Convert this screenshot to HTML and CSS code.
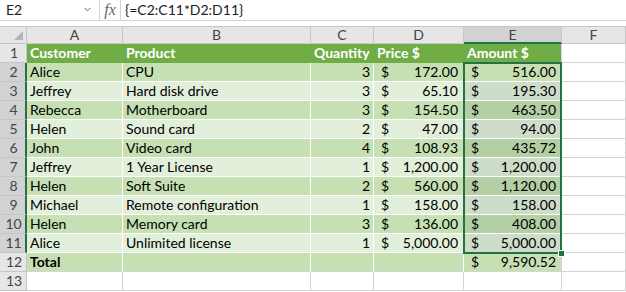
FILE: index.html
```html
<!DOCTYPE html>
<html lang="en">
<head>
    <meta charset="UTF-8">
    <title>Orders - Sheet1</title>
    <link rel="stylesheet" href="styles.css">
</head>
<body>

    <!-- Barre de formule -->
    <div class="formula-bar">
        <div class="name-box">
            <span>E2</span>
            <svg width="7" height="5" viewBox="0 0 7 5"><polyline points="0.5,0.8 3.5,3.8 6.5,0.8" fill="none" stroke="#666" stroke-width="1"/></svg>
        </div>
        <div class="fx">fx</div>
        <div class="formula">{=C2:C11*D2:D11}</div>
    </div>
    <div class="bar-gap"></div>

    <div class="sheet">
        <!-- En-têtes de colonnes -->
        <div class="corner"></div>
        <div class="ch">A</div>
        <div class="ch">B</div>
        <div class="ch">C</div>
        <div class="ch">D</div>
        <div class="ch on">E</div>
        <div class="ch">F</div>

        <!-- Ligne 1 : en-tête du tableau -->
        <div class="rh">1</div>
        <div class="cell th">Customer</div>
        <div class="cell th">Product</div>
        <div class="cell th">Quantity</div>
        <div class="cell th">Price $</div>
        <div class="cell th last">Amount $</div>
        <div class="cell"></div>

        <!-- Ligne 2 + plage sélectionnée E2:E11 -->
        <div class="rh on">2</div>
        <div class="cell even">Alice</div>
        <div class="cell even">CPU</div>
        <div class="cell even num">3</div>
        <div class="cell even acc"><span>$</span><span>172.00</span></div>
        <div class="sel-range">
            <div class="cell even acc last"><span>$</span><span>516.00</span></div>
            <div class="cell odd sel acc last"><span>$</span><span>195.30</span></div>
            <div class="cell even sel acc last"><span>$</span><span>463.50</span></div>
            <div class="cell odd sel acc last"><span>$</span><span>94.00</span></div>
            <div class="cell even sel acc last"><span>$</span><span>435.72</span></div>
            <div class="cell odd sel acc last"><span>$</span><span>1,200.00</span></div>
            <div class="cell even sel acc last"><span>$</span><span>1,120.00</span></div>
            <div class="cell odd sel acc last"><span>$</span><span>158.00</span></div>
            <div class="cell even sel acc last"><span>$</span><span>408.00</span></div>
            <div class="cell odd sel acc last"><span>$</span><span>5,000.00</span></div>
            <div class="sel-box"><div class="fill-handle"></div></div>
        </div>
        <div class="cell"></div>

        <div class="rh on">3</div>
        <div class="cell odd">Jeffrey</div>
        <div class="cell odd">Hard disk drive</div>
        <div class="cell odd num">3</div>
        <div class="cell odd acc"><span>$</span><span>65.10</span></div>
        <div class="cell"></div>

        <div class="rh on">4</div>
        <div class="cell even">Rebecca</div>
        <div class="cell even">Motherboard</div>
        <div class="cell even num">3</div>
        <div class="cell even acc"><span>$</span><span>154.50</span></div>
        <div class="cell"></div>

        <div class="rh on">5</div>
        <div class="cell odd">Helen</div>
        <div class="cell odd">Sound card</div>
        <div class="cell odd num">2</div>
        <div class="cell odd acc"><span>$</span><span>47.00</span></div>
        <div class="cell"></div>

        <div class="rh on">6</div>
        <div class="cell even">John</div>
        <div class="cell even">Video card</div>
        <div class="cell even num">4</div>
        <div class="cell even acc"><span>$</span><span>108.93</span></div>
        <div class="cell"></div>

        <div class="rh on">7</div>
        <div class="cell odd">Jeffrey</div>
        <div class="cell odd">1 Year License</div>
        <div class="cell odd num">1</div>
        <div class="cell odd acc"><span>$</span><span>1,200.00</span></div>
        <div class="cell"></div>

        <div class="rh on">8</div>
        <div class="cell even">Helen</div>
        <div class="cell even">Soft Suite</div>
        <div class="cell even num">2</div>
        <div class="cell even acc"><span>$</span><span>560.00</span></div>
        <div class="cell"></div>

        <div class="rh on">9</div>
        <div class="cell odd">Michael</div>
        <div class="cell odd">Remote configuration</div>
        <div class="cell odd num">1</div>
        <div class="cell odd acc"><span>$</span><span>158.00</span></div>
        <div class="cell"></div>

        <div class="rh on">10</div>
        <div class="cell even">Helen</div>
        <div class="cell even">Memory card</div>
        <div class="cell even num">3</div>
        <div class="cell even acc"><span>$</span><span>136.00</span></div>
        <div class="cell"></div>

        <div class="rh on">11</div>
        <div class="cell odd">Alice</div>
        <div class="cell odd">Unlimited license</div>
        <div class="cell odd num">1</div>
        <div class="cell odd acc"><span>$</span><span>5,000.00</span></div>
        <div class="cell"></div>

        <!-- Ligne 12 : total -->
        <div class="rh">12</div>
        <div class="cell even total">Total</div>
        <div class="cell even total"></div>
        <div class="cell even total"></div>
        <div class="cell even total"></div>
        <div class="cell even total acc last"><span>$</span><span>9,590.52</span></div>
        <div class="cell"></div>

        <div class="rh">13</div>
        <div class="cell"></div>
        <div class="cell"></div>
        <div class="cell"></div>
        <div class="cell"></div>
        <div class="cell"></div>
        <div class="cell"></div>
    </div>

</body>
</html>
```

FILE: styles.css
```css
body {
    margin: 0;
    width: 626px;
    height: 292px;
    overflow: hidden;
    background-color: #ffffff;
    color: #000000;
    font-family: Lato, "Liberation Sans", sans-serif;
    font-size: 14px;
}
.formula-bar {
    display: flex;
    height: 20px;
    border-bottom: 1px solid #d4d4d4;
    line-height: 20px;
}
.name-box {
    width: 100px;
    box-sizing: border-box;
    display: flex;
    align-items: center;
    justify-content: space-between;
    padding: 0 8px 0 6px;
    border-right: 1px solid #d4d4d4;
    color: #222;
}
.name-box svg {
    margin-top: -2px;
}
.fx {
    width: 21px;
    box-sizing: border-box;
    border-right: 1px solid #d4d4d4;
    text-align: center;
    font-family: "Liberation Serif", serif;
    font-style: italic;
    font-size: 16px;
    color: #666;
}
.formula {
    padding-left: 4px;
    color: #222;
}
.bar-gap {
    height: 5px;
}
.sheet {
    display: grid;
    grid-template-columns: 27px 96px 188px 63px 90px 98px 64px;
    grid-template-rows: 17px repeat(13, 19px);
    border-top: 1px solid #c6c6c6;
}
.corner, .ch, .rh {
    box-sizing: border-box;
    background-color: #e6e6e6;
    border-right: 1px solid #c6c6c6;
    border-bottom: 1px solid #c6c6c6;
    color: #444;
}
.corner {
    position: relative;
}
.corner::after {
    content: "";
    position: absolute;
    right: 3px;
    bottom: 3px;
    border-left: 9px solid transparent;
    border-bottom: 9px solid #b4b4b4;
}
.ch {
    text-align: center;
    line-height: 16px;
}
.ch.on {
    background-color: #d2d2d2;
    border-bottom: 2px solid #217346;
}
.rh {
    text-align: center;
    line-height: 18px;
    padding-left: 2px;
}
.rh.on {
    background-color: #d2d2d2;
    border-right: 2px solid #217346;
}
.cell {
    box-sizing: border-box;
    height: 19px;
    padding: 0 3px;
    line-height: 18px;
    white-space: nowrap;
    overflow: hidden;
    border-right: 1px solid #d4d4d4;
    border-bottom: 1px solid #d4d4d4;
}
.th {
    background-color: #70ad47;
    border-color: #70ad47;
    color: #ffffff;
    font-weight: bold;
}
.even {
    background-color: #c6e0b4;
    border-color: #ffffff;
}
.odd {
    background-color: #e2efda;
    border-color: #ffffff;
}
.even.sel {
    background-color: #b3cfa3;
}
.odd.sel {
    background-color: #cedcca;
}
.total {
    font-weight: bold;
    border-bottom-color: #d4d4d4;
}
.last {
    border-right-color: #d4d4d4;
}
.num {
    text-align: right;
}
.acc {
    display: flex;
    justify-content: space-between;
    padding: 0 5px 0 7px;
}
.total.acc {
    font-weight: normal;
}
.sel-range {
    grid-column: 6;
    grid-row: span 10;
    display: flex;
    flex-direction: column;
    position: relative;
}
.sel-box {
    position: absolute;
    top: -1px;
    right: 0;
    bottom: -1px;
    left: -1px;
    border: 2px solid #217346;
}
.fill-handle {
    position: absolute;
    right: -5px;
    bottom: -5px;
    width: 5px;
    height: 5px;
    background-color: #217346;
    border: 1px solid #ffffff;
}
```
